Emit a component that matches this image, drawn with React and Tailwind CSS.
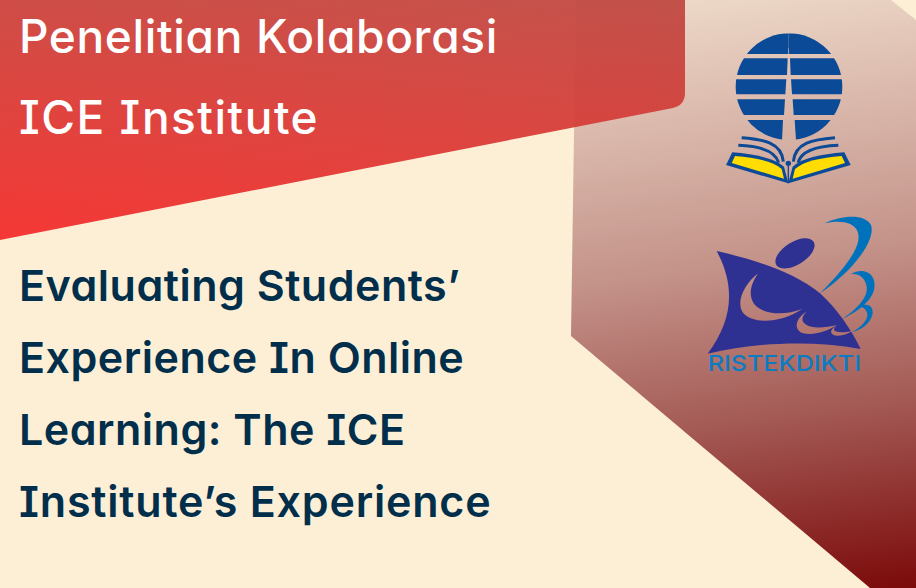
import React from 'react';

const fontCls = "font-['Inter',sans-serif] [font-feature-settings:'cv08','cv11']";

function UtLogo() {
  return (
    <svg width="170" height="180" viewBox="0 0 510 540" className="shrink-0">
      <defs>
        <clipPath id="ut-circle">
          <ellipse cx="267" cy="200" rx="160" ry="160" />
        </clipPath>
      </defs>
      <g clipPath="url(#ut-circle)" fill="#0b4a96">
        {/* top cap with the slit of the spire */}
        <path d="M100 40H264V102H100Z" />
        <path d="M266 40H440V102H266Z" />
        <path d="M264 40H266V85H264Z" />
        <path d="M100 115H263L261 165H100Z" />
        <path d="M270 115H440V165H272Z" />
        <path d="M100 178H259L256 223H100Z" />
        <path d="M273 178H440V223H276Z" />
        <path d="M100 238H255L252 285H100Z" />
        <path d="M278 238H440V285H281Z" />
        <path d="M100 300H249L246 360H100Z" />
        <path d="M284 300H440V360H288Z" />
      </g>
      {/* book */}
      <path d="M97 397C170 403 225 415 252 440L265 490L78 435Z" fill="#0b4a96" />
      <path d="M433 397C360 403 305 415 278 440L265 490L452 435Z" fill="#0b4a96" />
      <path d="M105 408C170 413 220 425 245 447L252 476L95 429Z" fill="#ffdd00" />
      <path d="M425 408C360 413 310 425 285 447L278 476L435 429Z" fill="#ffdd00" />
      <g fill="none" stroke="#0b4a96" strokeWidth="9">
        <path d="M125 353C190 358 245 368 250 425" />
        <path d="M115 376C170 378 225 390 236 428" />
        <path d="M405 353C340 358 285 368 280 425" />
        <path d="M415 376C360 378 305 390 294 428" />
      </g>
      <circle cx="265" cy="430" r="8" fill="#0b4a96" />
      <path d="M263 430H267V490H263Z" fill="#0b4a96" />
    </svg>
  );
}

function RistekLogo() {
  return (
    <svg width="190" height="180" viewBox="0 0 570 540" className="shrink-0">
      <defs>
        <mask id="swoosh">
          <rect width="570" height="540" fill="white" />
          <path d="M190 205C150 235 120 290 145 325C180 362 265 350 322 312C270 332 205 330 178 298C158 270 168 235 190 205Z" fill="black" />
          <path d="M335 320C300 340 295 375 325 385C355 392 395 380 425 360C390 370 345 372 328 355C318 345 322 332 335 320Z" fill="black" />
          <path d="M425 362C400 375 405 392 430 392C445 392 460 386 472 378C450 382 425 385 418 376C415 370 420 366 425 362Z" fill="black" />
        </mask>
      </defs>
      <g fill="#2e3192">
        <path
          mask="url(#swoosh)"
          d="M65 138C160 160 290 195 375 265C425 310 470 375 497 432C350 405 180 412 38 446C110 350 125 250 65 138Z"
        />
        <ellipse cx="300" cy="145" rx="66" ry="34" transform="rotate(-32 300 145)" />
      </g>
      <g fill="#0072bc">
        <path d="M388 55C440 30 510 25 528 60C545 110 460 210 375 265C440 200 505 125 488 80C478 50 430 45 388 55Z" />
        <path d="M468 207C505 185 545 205 538 250C532 290 480 325 442 342C480 315 520 280 515 245C510 215 490 205 468 207Z" />
        <path d="M490 305C520 290 538 305 532 330C525 355 500 375 470 382C500 365 525 340 515 320C510 308 500 305 490 305Z" />
      </g>
      <text
        x="38"
        y="498"
        fontSize="66"
        textLength="460"
        lengthAdjust="spacingAndGlyphs"
        fill="#0b7cc2"
        fontFamily="Inter, sans-serif"
        fontWeight="500"
        className="[font-feature-settings:normal]"
      >
        RISTEKDIKTI
      </text>
    </svg>
  );
}

export default function App() {
  return (
    <div className={`relative flex h-[588px] w-[916px] flex-col overflow-hidden bg-[#fdefd6] ${fontCls}`}>
      <div className="absolute top-0 left-[571px] flex h-[588px] w-[345px] flex-col items-start bg-[linear-gradient(172deg,#efdccb_0%,#c4938a_45%,#a45a55_70%,#7b0a0a_100%)] pt-[20px] pl-[124px] [clip-path:polygon(5px_0,320px_0,345px_20px,345px_588px,299px_588px,0_336px)]">
        <div className="ml-[5px]">
          <UtLogo />
        </div>
        <div className="mt-[5px]">
          <RistekLogo />
        </div>
      </div>

      <div className="relative z-10 h-[240px] w-[685px] shrink-0 overflow-hidden bg-[linear-gradient(186deg,rgba(190,70,64,0.92)_0%,rgba(245,50,48,0.97)_100%)] [clip-path:path('M0_0H685V93Q685_105_673_108L0_240Z')]">
        <h1 className="-mt-[4px] px-[19px] text-[46px] leading-[81px] font-[550] tracking-[0.65px] text-white">
          Penelitian Kolaborasi
          <br />
          <span className="tracking-[1.5px]">ICE Institute</span>
        </h1>
      </div>

      <h2 className="mt-[9px] px-[19px] text-[43px] leading-[72px] font-semibold tracking-[0.5px] text-[#012f4b]">
        Evaluating Students’
        <br />
        Experience In Online
        <br />
        Learning: The ICE
        <br />
        <span className="tracking-[0.8px]">Institute’s Experience</span>
      </h2>
    </div>
  );
}
